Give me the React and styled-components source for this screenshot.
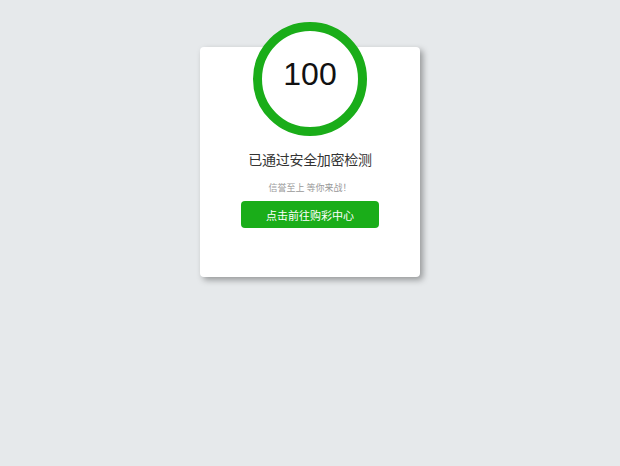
import React from "react";
import styled, { createGlobalStyle } from "styled-components";

const Global = createGlobalStyle`
  html, body {
    margin: 0;
    padding: 0;
    background: #e6e9eb;
    font-family: "Liberation Sans", "Noto Sans CJK SC", sans-serif;
  }
  body { min-height: 466px; }
`;

const Page = styled.div`
  display: flex;
  justify-content: center;
  padding-top: 47px;
`;

const Card = styled.div`
  width: 220px;
  height: 230px;
  background: #fff;
  border-radius: 4px;
  box-shadow: 3px 3px 6px rgba(0, 0, 0, 0.35);
  display: flex;
  flex-direction: column;
  align-items: center;
`;

const Ring = styled.div`
  box-sizing: border-box;
  width: 114px;
  height: 114px;
  margin-top: -25px;
  border: 9px solid #1aad19;
  border-radius: 50%;
  background: #fff;
  display: flex;
  align-items: center;
  justify-content: center;
`;

const Score = styled.span`
  font-family: "Liberation Sans", Arial, sans-serif;
  font-size: 32px;
  line-height: 1;
  color: #111;
  margin-top: -11px;
`;

const Title = styled.h1`
  margin: 13px 0 0;
  font-size: 14px;
  line-height: 20px;
  font-weight: normal;
  color: #333;
  letter-spacing: -0.3px;
  font-family: "Noto Sans CJK SC", sans-serif;
`;

const Sub = styled.p`
  margin: 12px 0 0;
  font-size: 9px;
  line-height: 14px;
  color: #999;
  font-family: "Noto Sans CJK SC", sans-serif;
`;

const Button = styled.button`
  margin-top: 6px;
  width: 138px;
  height: 27px;
  border: none;
  border-radius: 4px;
  background: #1aad19;
  color: #fff;
  font-size: 11px;
  font-family: "Noto Sans CJK SC", sans-serif;
  cursor: pointer;
  padding: 0;
`;

export default function App() {
  return (
    <>
      <Global />
      <Page>
        <Card>
          <Ring>
            <Score>100</Score>
          </Ring>
          <Title>已通过安全加密检测</Title>
          <Sub>信誉至上 等你来战！</Sub>
          <Button>点击前往购彩中心</Button>
        </Card>
      </Page>
    </>
  );
}
